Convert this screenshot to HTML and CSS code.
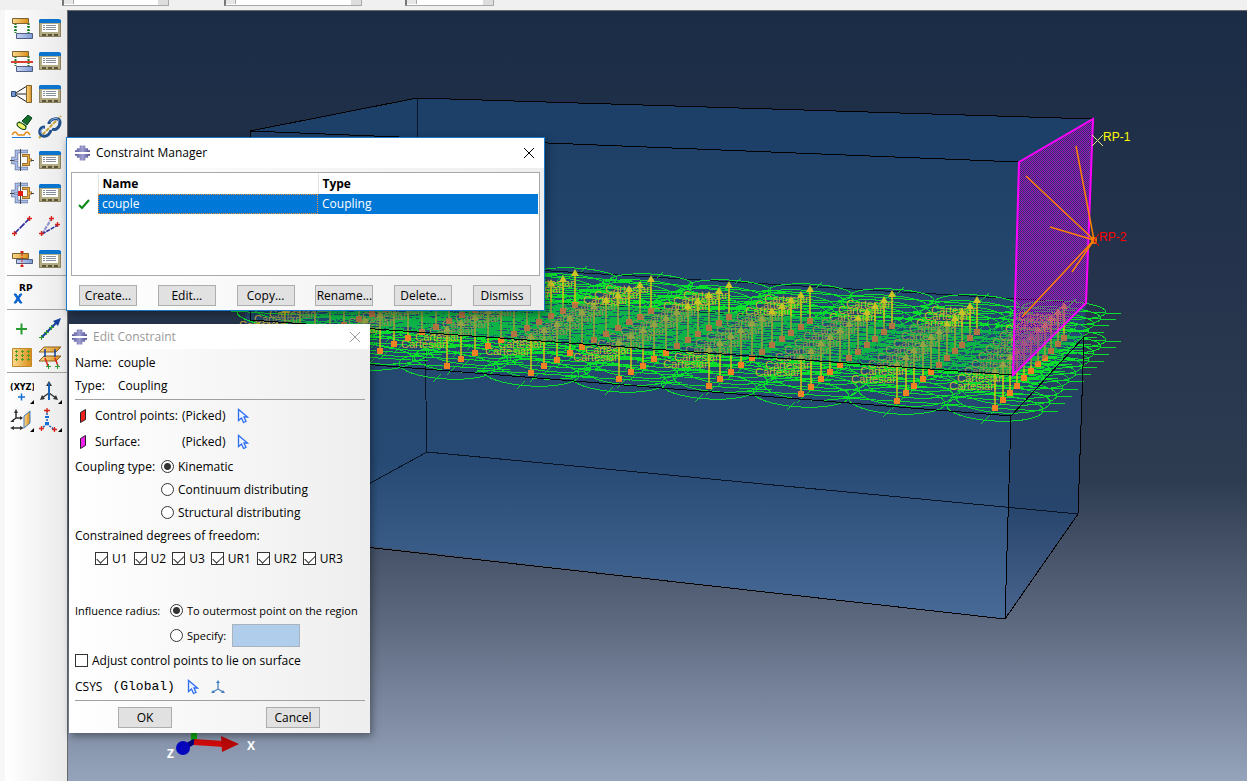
FILE: index.html
```
<!DOCTYPE html>
<html lang="en">
<head>
<meta charset="utf-8">
<title>Constraint Manager</title>
<link rel="stylesheet" href="styles.css">
</head>
<body>
<svg class="defs" aria-hidden="true">
  <defs>
    <linearGradient id="gold" x1="0" x2="1"><stop offset="0" stop-color="#fbd98e"/><stop offset="1" stop-color="#d98d16"/></linearGradient>
    <linearGradient id="steel" x1="0" x2="1"><stop offset="0" stop-color="#c9d6f3"/><stop offset="1" stop-color="#7e9bd6"/></linearGradient>
    <linearGradient id="gem" x1="0" x2="1"><stop offset="0" stop-color="#5a5a9c"/><stop offset=".5" stop-color="#a09fd0"/><stop offset="1" stop-color="#4c4a8c"/></linearGradient>
    <symbol id="manager" viewBox="0 0 24 24">
      <path d="M1 4h22v17H1z" fill="#b3ab84"/><path d="M1.500 6v14.500h21V6" fill="none" stroke="#8a8260"/><path d="M2 3h19l2 1v3H1V4z" fill="#0a74cf"/>
      <path d="M4 8h16v8H4z" fill="#fff"/><path d="M5 9.500h2M8 9.500h10M5 11.500h2M8 11.500h10M5 13.500h2M8 13.500h10" fill="none" stroke="#87909a"/>
      <path d="M4 18h4v2H4zm6 0h4v2h-4zm6 0h4v2h-4z" fill="#5b5638"/>
    </symbol>
    <symbol id="logo" viewBox="0 0 16 16">
      <path d="M5 0h6v3h3v2h2v2H0V5h2V3h3zM0 9h16v2h-2v2h-3v3H5v-3H2v-2H0z" fill="url(#gem)"/>
    </symbol>
    <symbol id="cursor" viewBox="0 0 12 16">
      <path d="M1.500 1.500v11l3-2.500 2 4.500 2.500-1-2-4.500h3.500z" fill="#edf3ff" stroke="#2e6fef" stroke-width="1.300"/>
    </symbol>
    <symbol id="section" viewBox="0 0 24 24">
      <path d="M18 3.500H6.500v7H3v4h3.500v6H18" fill="none" stroke="#68779c" stroke-width="3.500"/><path d="M17.500 3.500H6.500v7H3v4h3.500v6h11" fill="none" stroke="#a9bdea" stroke-width="2"/>
      <path d="M12 7.500h6.500v9H12M18 12h4" fill="none" stroke="#7d6232" stroke-width="3"/><path d="M12.500 7.500h6v9h-6M18 12h3.500" fill="none" stroke="#eaa93c" stroke-width="1.600"/>
      <path d="M10.500 1v22M0 12.500h4m17 0h3" stroke="#444"/>
    </symbol>
  </defs>
</svg>
<div class="app">
  <header class="topbar">
    <select class="combo combo-a" aria-label="Module"></select>
    <select class="combo combo-b" aria-label="Model"></select>
    <select class="combo combo-c" aria-label="Step"></select>
  </header>
  <div class="workspace">
    <nav class="toolbox" aria-label="Toolbox">
      <div class="tools tools-main">
        <button aria-label="Create interaction"><svg viewBox="0 0 24 24"><path d="M5.500 7v10M18.500 7v10" stroke="#148026" stroke-width="2" stroke-dasharray="2 1"/><path d="M2.500 2.500h16v5h-16z" fill="url(#gold)" stroke="#7d6232"/><path d="M6.500 17.500h16v5h-16z" fill="url(#steel)" stroke="#515e80"/><path d="M4 10.500h3M17 10.500h3M4 14.500h3M17 14.500h3" stroke="#148026"/></svg></button>
        <button aria-label="Interaction manager"><svg><use href="#manager"/></svg></button>
        <button aria-label="Create interaction property"><svg viewBox="0 0 24 24"><path d="M5.500 7v10M18.500 7v10" stroke="#148026" stroke-width="2" stroke-dasharray="2 1"/><path d="M2.500 2.500h16v5h-16z" fill="url(#gold)" stroke="#7d6232"/><path d="M6.500 17.500h16v5h-16z" fill="url(#steel)" stroke="#515e80"/><path d="M1 13h22" stroke="#d94032" stroke-width="2"/></svg></button>
        <button aria-label="Interaction property manager"><svg><use href="#manager"/></svg></button>
        <button aria-label="Create constraint"><svg viewBox="0 0 24 24"><path d="M4 12L17 4M4 12h13M4 12l13 8" stroke="#222" fill="none"/><path d="M1.500 9.500h4v5h-4z" fill="#7397cd" stroke="#304d80"/><path d="M16.500 3.500h5v17h-5z" fill="url(#gold)" stroke="#7d6232"/></svg></button>
        <button aria-label="Constraint manager"><svg><use href="#manager"/></svg></button>
        <button aria-label="Find contact pairs"><svg viewBox="0 0 24 24"><path d="M2 22.500h19" stroke="#2178cc"/><path d="M2 20c2-4 4-4 6 0h6c2-4 4-4 6 0" stroke="#e58a16" stroke-width="1.500" fill="none"/><path d="M12 6l6-6 4 3-5 7z" fill="#15702c" stroke="#0b4018"/><path d="M9 6l8 5-2 3-7-5z" fill="#25853a"/><ellipse cx="11.500" cy="11" rx="2.500" ry="5" transform="rotate(-58 11.500 11)" fill="#ebf267" stroke="#0b4018"/></svg></button>
        <button aria-label="Create connector"><svg viewBox="0 0 24 24"><path d="M1 23L23 1" stroke="#c2a237" stroke-width="2" stroke-dasharray="4 1"/><path d="M7 12c-6 0-7 7-2 9 4 1 7-2 8-6M11 9c0-5 11-8 11-2 0 5-4 9-8 7" fill="none" stroke="#214f8b" stroke-width="3"/><path d="M6 13c-4 1-4 5-1 7M12 7c2-4 8-5 9-1" fill="none" stroke="#8fb2de"/></svg></button>
        <button aria-label="Create connector section"><svg><use href="#section"/></svg></button>
        <button aria-label="Connector section manager"><svg><use href="#manager"/></svg></button>
        <button aria-label="Create connector assignment"><svg viewBox="0 0 24 24"><use href="#section"/><path d="M8 10h5v5H8z" fill="#e01d12"/></svg></button>
        <button aria-label="Connector assignment manager"><svg><use href="#manager"/></svg></button>
        <button aria-label="Create wire feature"><svg viewBox="0 0 24 24"><path d="M4 20L20 4" stroke="#2a2a9b" stroke-width="1.600" stroke-dasharray="7 1"/><path d="M2 19.500h5M4.500 17v5M17 4.500h5M19.500 2v5" stroke="#d92118" stroke-width="1.300"/></svg></button>
        <button aria-label="Modify wire feature"><svg viewBox="0 0 24 24"><path d="M4 20L14 4" stroke="#8d8dcb" stroke-width="2" stroke-dasharray="4 1"/><path d="M4 20l16-9" stroke="#2a2a9b" stroke-width="1.600" stroke-dasharray="4 1"/><path d="M1 19.500h5M3.500 17v5M11 4.500h5M13.500 2v5M17 10.500h5M19.500 8v5" stroke="#d92118" stroke-width="1.300"/></svg></button>
        <button aria-label="Create fasteners"><svg viewBox="0 0 24 24"><path d="M2.500 6.500h16v5h-16z" fill="url(#gold)" stroke="#7d6232"/><path d="M6.500 12.500h16v4h-16z" fill="url(#steel)" stroke="#515e80"/><path d="M12 4v16" stroke="#d92118" stroke-dasharray="2 1"/><path d="M10.500 4h3v2h-3zm0 14h3v2h-3z" fill="#d92118"/></svg></button>
        <button aria-label="Fastener manager"><svg><use href="#manager"/></svg></button>
      </div>
      <div class="tools tools-rp">
        <button aria-label="Create reference point"><svg viewBox="0 0 24 24"><text x="9" y="9" class="rp-label">RP</text><path d="M4 12h2l6 9h-2zM10 12h2l-6 9H4z" fill="#0a62ce" stroke="#0a62ce"/></svg></button>
      </div>
      <div class="tools tools-sets">
        <button aria-label="Create point"><svg viewBox="0 0 24 24"><path d="M6 12h11M11.500 6.500v11" stroke="#2a9b32" stroke-width="2"/></svg></button>
        <button aria-label="Create datum line"><svg viewBox="0 0 24 24"><path d="M3 21L20 4" stroke="#123f9c" stroke-width="2"/><path d="M23 1l-3 8-5-5z" fill="#123f9c"/><path d="M1 20.500h5M3.500 18v5M6 15.500h5M8.500 13v5M11 10.500h5M13.500 8v5" stroke="#2a9b32"/></svg></button>
        <button aria-label="Create point pattern"><svg viewBox="0 0 24 24"><path d="M2.500 3.500h19v18h-19z" fill="url(#gold)" stroke="#c08a2a"/><path d="M5 6.500h3M11 6.500h3M17 6.500h3M5 10.500h3M11 10.500h3M17 10.500h3M5 14.500h3M11 14.500h3M17 14.500h3M6.500 5v3M12.500 5v3M18.500 5v3M6.500 9v3M12.500 9v3M18.500 9v3M6.500 13v3M12.500 13v3M18.500 13v3" stroke="#4b9d28"/></svg></button>
        <button aria-label="Create attachment lines"><svg viewBox="0 0 24 24"><path d="M6 2h17l-5 5H1zM6 11h17l-5 5H1z" fill="url(#gold)" stroke="#896323"/><path d="M7 4v8M17 4v8" stroke="#123f9c" stroke-width="1.500"/><path d="M7 13l3 8M17 13l3 8" stroke="#d92118" stroke-width="1.500"/><path d="M8 21.500h5M10.500 19v5M17 21.500h5M19.500 19v5" stroke="#2a9b32"/></svg></button>
      </div>
      <div class="tools tools-datum">
        <button aria-label="Create datum point"><svg viewBox="0 0 24 24"><text x="0" y="10" class="xyz-label">(XYZ)</text><path d="M8 17h7M11.500 13.500v7" stroke="#1470d4" stroke-width="1.500"/><path d="M24 20v4h-4z"/></svg></button>
        <button aria-label="Create datum axis"><svg viewBox="0 0 24 24"><path d="M11 13L4 18M11 13l7 5" stroke="#333" stroke-width="1.500"/><path d="M2 20l2-5 3 4zM20 20l-2-5-3 4zM11 1L8 6h6z" fill="#333"/><path d="M11 3v17" stroke="#1b62b0" stroke-width="2"/><path d="M24 20v4h-4z"/></svg></button>
        <button aria-label="Create datum plane"><svg viewBox="0 0 24 24"><path d="M6 3v7h6M6 10l-4 3M3 20h9" stroke="#333" stroke-width="1.500" fill="none"/><path d="M6 1L4 5h4zM13 10l-3-2v4zM0 20l4-2v4zM14 20l-4-2v4zM0 14l4-3v3z" fill="#333"/><path d="M14 8l6-5v12l-6 5z" fill="url(#gold)" stroke="#3d7ac0"/><path d="M24 20v4h-4z"/></svg></button>
        <button aria-label="Create datum coordinate system"><svg viewBox="0 0 24 24"><path d="M9 2v14M9 16l-5 4M9 16l8 6" stroke="#1b62b0" stroke-width="1.500" stroke-dasharray="2 1"/><path d="M7 8h4v2H7zM7 14h4v3H7z" fill="#1470d4"/><path d="M6 2.500h6M9 0v5M1 20.500h5M3.500 18v5M14 21.500h5M16.500 19v5" stroke="#d92118" stroke-width="1.300"/><path d="M24 20v4h-4z"/></svg></button>
      </div>
    </nav>
    <main class="viewport">
      <svg id="scene" class="scene" viewBox="67 10 1180 771" preserveAspectRatio="xMinYMin slice" role="img" aria-label="Model with coupling constraint">
        <defs>
          <pattern id="mesh" width="2" height="2" patternUnits="userSpaceOnUse"><rect x="1" width="1" height="1" class="dot"/><rect y="1" width="1" height="1" class="dot"/></pattern>
          <linearGradient id="block" gradientUnits="userSpaceOnUse" x1="0" y1="98" x2="0" y2="619"><stop offset="0" stop-color="#1d3d64"/><stop offset=".35" stop-color="#24476e"/><stop offset=".7" stop-color="#274a74"/><stop offset="1" stop-color="#486a97"/></linearGradient>
          <linearGradient id="side" gradientUnits="userSpaceOnUse" x1="0" y1="337" x2="0" y2="619"><stop offset="0" stop-color="#26405f"/><stop offset=".6" stop-color="#27446c"/><stop offset="1" stop-color="#4a658e"/></linearGradient>
        </defs>
        <path d="M250 131L417 98l676 21-7 184-2 34-6 177-73 105-765-88z" fill="url(#block)"/>
        <path d="M250 131L417 98l676 21-74 43z" fill="#1c4068"/>
        <path d="M1011 416l73-79-6 177-73 105z" fill="url(#side)"/>
        <g class="edge edge-far"><path d="M417 98v165l669 40M424 294l660 43M424 294l3 158 651 62M427 452l-177 97"/></g>
        <g id="glyphs"></g>
        <path d="M250 320l763 55 71-38-4-3-660-40z" fill="#1f5688" opacity=".3"/>
        <g class="edge"><path d="M250 131L417 98l676 21M250 131l769 31M250 320l763 55M250 355l761 61-6 203-755-85M1011 416l73-79-6 177-73 105M250 131v189"/></g>
        <path d="M1019 162l74-43-7 184-73 72z" fill="url(#mesh)"/>
        <path d="M1019 162l74-43-7 184-73 72z" class="picked"/>
        <path d="M1094 240l-18-94M1094 240l-68-64M1094 240l-44-13M1094 240l-72 77M1094 240l-22 32" class="link"/>
        <path d="M1092 238h4v5h-4z" class="link"/>
        <path d="M1092 135l11 11M1103 135l-11 11" stroke="#e9e98b"/>
        <path d="M1094 240l5-6M1094 240l5 6" stroke="#f00"/>
        <text x="1103" y="141" class="point-label rp1">RP-1</text>
        <text x="1099" y="241" class="point-label rp2">RP-2</text>
        <path d="M191 730h6v12h-6z" fill="#0ba80b"/><path d="M183 748l12-7" stroke="#00007c" stroke-width="5"/><path d="M194 742l30 2" stroke="#cf0b0b" stroke-width="6"/><path d="M221 736l18 8-17 8z" fill="#b80808"/><circle cx="183" cy="748" r="7" fill="#0606bd"/>
        <text x="247" y="750" class="axis-label">X</text><text x="167" y="758" class="axis-label">Z</text>
      </svg>
    </main>
  </div>

  <section class="window manager" role="dialog" aria-labelledby="manager-title">
    <div class="titlebar"><svg class="logo"><use href="#logo"/></svg><h1 id="manager-title">Constraint Manager</h1><button class="close" aria-label="Close"><svg viewBox="0 0 12 12"><path d="M1 1l10 10M11 1L1 11"/></svg></button></div>
    <div class="manager-body">
      <div class="list">
        <table>
          <colgroup><col class="col-mark"><col><col></colgroup>
          <thead><tr><th></th><th scope="col">Name</th><th scope="col">Type</th></tr></thead>
          <tbody><tr><td><svg class="tick" viewBox="0 0 12 12"><path d="M1 7l3 3 7-8" /></svg></td><td class="selected focused">couple</td><td class="selected">Coupling</td></tr></tbody>
        </table>
      </div>
      <div class="actions"><button class="btn">Create...</button><button class="btn">Edit...</button><button class="btn">Copy...</button><button class="btn">Rename...</button><button class="btn">Delete...</button><button class="btn">Dismiss</button></div>
    </div>
  </section>

  <form class="window editor" role="dialog" aria-labelledby="editor-title">
    <div class="titlebar"><svg class="logo"><use href="#logo"/></svg><h1 id="editor-title">Edit Constraint</h1><button type="button" class="close" aria-label="Close"><svg viewBox="0 0 12 12"><path d="M1 1l10 10M11 1L1 11"/></svg></button></div>
    <div class="editor-body">
      <dl class="facts"><dt>Name:</dt><dd>couple</dd><dt>Type:</dt><dd>Coupling</dd></dl>
      <hr>
      <div class="picks">
        <svg class="region" viewBox="0 0 8 16"><path d="M1.500 4.500l5-3v10l-5 3z" fill="#f02020" stroke="#222"/></svg><span>Control points:</span><span>(Picked)</span><button type="button" class="pick" aria-label="Pick control points"><svg class="cursor"><use href="#cursor"/></svg></button>
        <svg class="region" viewBox="0 0 8 16"><path d="M1.500 4.500l5-3v10l-5 3z" fill="#f020f0" stroke="#222"/></svg><span>Surface:</span><span>(Picked)</span><button type="button" class="pick" aria-label="Pick surface"><svg class="cursor"><use href="#cursor"/></svg></button>
      </div>
      <div class="coupling" role="radiogroup" aria-labelledby="ct"><span id="ct" class="row">Coupling type:</span>
        <div><label class="row"><input type="radio" name="type" checked>Kinematic</label><label class="row"><input type="radio" name="type">Continuum distributing</label><label class="row"><input type="radio" name="type">Structural distributing</label></div>
      </div>
      <div class="row">Constrained degrees of freedom:</div>
      <div class="dof"><label class="row"><input type="checkbox" checked>U1</label><label class="row"><input type="checkbox" checked>U2</label><label class="row"><input type="checkbox" checked>U3</label><label class="row"><input type="checkbox" checked>UR1</label><label class="row"><input type="checkbox" checked>UR2</label><label class="row"><input type="checkbox" checked>UR3</label></div>
      <div class="influence" role="radiogroup" aria-labelledby="ir"><span id="ir" class="row tall">Influence radius:</span>
        <div><label class="row tall"><input type="radio" name="radius" checked>To outermost point on the region</label><div class="specify"><label class="row tall"><input type="radio" name="radius">Specify:</label><input type="text" aria-label="Radius" disabled></div></div>
      </div>
      <label class="row tall"><input type="checkbox">Adjust control points to lie on surface</label>
      <div class="row csys"><span>CSYS</span><span class="mono">(Global)</span><button type="button" class="pick" aria-label="Pick CSYS"><svg class="cursor"><use href="#cursor"/></svg></button><button type="button" class="pick" aria-label="Create CSYS"><svg class="triad" viewBox="0 0 14 14"><path d="M7 2v7l-5 3M7 9l5 3" fill="none" stroke="#4a82bd" stroke-width="1.300"/><path d="M7 0L5 3h4zM0 13l2-3 2 3zM14 13l-2-3-2 3z" fill="#4a82bd"/></svg></button></div>
      <hr>
      <div class="confirm"><button type="button" class="btn">OK</button><button type="button" class="btn">Cancel</button></div>
    </div>
  </form>
</div>
<script src="scene.js"></script>
</body>
</html>
```

FILE: styles.css
```
* { box-sizing: border-box; }
body { margin: 0; font: 12px/16px "Open Sans", "Noto Sans", sans-serif; color: #000; }
.defs { position: absolute; width: 0; height: 0; }
button { font: inherit; color: inherit; padding: 0; margin: 0; border: 0; background: none; }
.app { position: relative; display: flex; flex-direction: column; height: 100vh; overflow: hidden; background: #f0f0f0; }
.topbar { height: 10px; display: flex; align-items: flex-start; padding-left: 62px; overflow: hidden; flex: none; }
.combo { appearance: none; height: 6px; border: 1px solid #a8a8a8; border-top: 0; border-left: 2px solid #777; border-radius: 0; padding: 0;
  background: linear-gradient(#aaa, #aaa) 9px 0 / 1px 4px no-repeat, linear-gradient(#e6e6e6, #e6e6e6) 0 0 / 9px 4px no-repeat, linear-gradient(#ddd, #ddd) right / 10px 100% no-repeat, #fff; }
.combo-a { width: 107px; margin-right: 55px; }
.combo-b { width: 138px; margin-right: 43px; }
.combo-c { width: 89px; }
.workspace { flex: 1; display: flex; min-height: 0; }

.toolbox { width: 67px; flex: none; border-left: 5px solid #f7f7f7; background: linear-gradient(90deg, #fff, #eaeaea); }
.tools { display: grid; grid-template-columns: 28px 28px; margin-left: 2px; border-bottom: 1px solid #a0a0a0; }
.tools button { display: flex; align-items: center; justify-content: center; }
.tools svg { width: 24px; height: 24px; }
.tools-main { grid-auto-rows: 33px; padding: 1px 0 0 1px; }
.tools-rp { grid-auto-rows: 29px; padding: 3px 0 1px 1px; }
.tools-sets, .tools-datum { grid-auto-rows: 28px; padding: 5px 0 1px 1px; }
.tools-datum { border: 0; }
.rp-label { font: bold 9px "DejaVu Sans", sans-serif; }
.xyz-label { font: bold 8px "DejaVu Sans", sans-serif; }

.viewport { flex: 1; min-width: 0; background: linear-gradient(#1b2c46 0, #25344c 35%, #2e3c52 61%, #5c687e 79%, #95a3bb 100%); box-shadow: inset 1px 1px #68686a; }
.scene { display: block; width: 100%; height: 100%; }
.dot { fill: #b400c0; shape-rendering: crispEdges; }
.edge { fill: none; stroke: #000; shape-rendering: crispEdges; }
.edge-far { stroke: #081423; }
.picked { fill: none; stroke: #f0f; stroke-width: 2; }
.link { fill: none; stroke: #ff8000; stroke-width: 1.5; }
.ring { fill: none; stroke: #08dc2c; shape-rendering: crispEdges; }
.stem { stroke: #d6c018; stroke-width: 1.5; }
.base { fill: #ef8024; }
.tip { fill: #c8c426; }
.scene-label { font: 11px "Liberation Sans", sans-serif; fill: #c9ae35; }
.point-label { font: 12px "Liberation Sans", sans-serif; }
.rp1 { fill: #ff0; }
.rp2 { fill: #f00; }
.axis-label { font: bold 12px "Open Sans", sans-serif; fill: #fff; }

.window { position: absolute; box-shadow: 2px 3px 8px rgba(0, 0, 0, .4); background: linear-gradient(90deg, #fff, #eee); }
.titlebar { display: flex; align-items: center; gap: 6px; background: #fff; padding: 0 9px 0 8px; }
.titlebar h1 { flex: 1; margin: 0; font-size: 12px; font-weight: 400; }
.logo { width: 15px; height: 16px; }
.close svg { display: block; width: 12px; height: 12px; fill: none; stroke: currentColor; }
.btn { height: 21px; width: 58px; border: 1px solid #adadad; background: #e1e1e1; text-align: center; white-space: nowrap; }

.manager { left: 66px; top: 137px; width: 479px; border: 1px solid #1979ca; }
.manager .titlebar { height: 30px; }
.manager-body { padding: 4px; }
.list { height: 104px; border: 1px solid #a8a8ac; background: #fff; padding: 1px; }
table { width: 100%; table-layout: fixed; border-collapse: collapse; }
.col-mark { width: 25px; }
th, td { height: 20px; padding: 0 4px; text-align: left; }
th + th { border-left: 1px solid #e3e3e3; }
td:first-child { padding: 0 0 0 5px; }
.tick { display: block; width: 12px; height: 12px; fill: none; stroke: #078a13; stroke-width: 2; }
.selected { background: #0078d7; color: #fff; }
.focused { outline: 1px dotted #ff8728; outline-offset: -1px; }
.actions { display: flex; justify-content: space-between; padding: 9px 9px 0 8px; }

.editor { left: 69px; top: 324px; width: 301px; }
.editor .titlebar { height: 25px; padding-left: 3px; color: #999; }
.editor-body { padding: 2px 5px 5px 6px; }
hr { border: 0; border-top: 1px solid #a0a0a0; margin: 0; }
.facts { display: grid; grid-template-columns: 43px 1fr; grid-auto-rows: 23px; align-items: center; margin: 0; padding-bottom: 2px; }
.facts dd { margin: 0; }
.picks { display: grid; grid-template-columns: 20px 87px 55px 12px; grid-auto-rows: 26px; align-items: center; padding: 3px 0 0; }
.region { width: 8px; height: 16px; margin-left: 4px; }
.cursor { display: block; width: 12px; height: 16px; }
.triad { display: block; width: 14px; height: 14px; }
.row { display: flex; align-items: center; gap: 4px; height: 23px; white-space: nowrap; }
.tall { height: 25px; }
.coupling, .influence { display: flex; gap: 8px; }
.coupling > span { width: 78px; }
.influence { font-size: 11px; }
.influence > span { width: 87px; }
.dof { display: flex; gap: 6px; padding: 0 0 28px 20px; }
input { margin: 0; flex: none; }
input[type="radio"], input[type="checkbox"] { appearance: none; width: 13px; height: 13px; border: 1px solid #333; background: #fff; }
input[type="radio"] { border-radius: 50%; }
input[type="radio"]:checked { background: radial-gradient(circle, #333 0 3px, #fff 4px); }
input[type="checkbox"]:checked::before { content: ""; display: block; width: 9px; height: 5px; margin: 2px 0 0 1px; border: solid #333; border-width: 0 0 1px 1px; transform: rotate(-45deg); }
.specify { display: flex; align-items: center; gap: 6px; }
input[type="text"] { width: 68px; height: 23px; border: 1px solid #a9b3bd; background: #b1cdec; }
.mono { font: 13px "Liberation Mono", monospace; }
.csys { height: 27px; gap: 10px; }
.csys .pick { margin-left: 2px; }
.confirm { display: flex; justify-content: space-between; padding: 6px 45px 0 43px; }
.confirm .btn { width: 54px; }
```

FILE: scene.js
```
const glyphs = document.getElementById('glyphs');

// Bottom anchor of each connector row, front and back ends.
const rows = [
  [285, 347, 425, 294], [365, 357, 500, 299], [447, 366, 575, 305], [531, 373, 651, 311],
  [619, 379, 729, 317], [709, 386, 810, 321], [801, 394, 892, 326], [897, 401, 977, 332], [995, 408, 1064, 338]
];
const rings = [];
const marks = [];
const labels = [];
for (const [x0, y0, x1, y1] of rows) {
  for (let i = 10; i >= 0; i--) {
    const t = i / 10 * (1 + 0.1 * (1 - i / 10));
    const x = Math.round(x0 + (x1 - x0) * t);
    const y = Math.round(y0 + (y1 - y0) * t);
    const top = Math.round(y - 37 + 5 * t);
    const rx = Math.round(48 - 6 * t);
    const ry = Math.round(13 - 4 * t);
    for (const cy of [top + 4, y]) {
      rings.push(`<ellipse cx="${x}" cy="${cy}" rx="${rx}" ry="${ry}" transform="rotate(3 ${x} ${cy})"/>`);
      rings.push(`<path d="M${x - rx - 6} ${cy - 3}L${x + rx + 15} ${cy + 4}M${x - 14} ${cy + ry + 3}l8 -8M${x + 6} ${cy - ry + 4}l6 -6"/>`);
    }
    rings.push(`<path d="M${x - 30} ${y - 16}l60 3"/>`);
    marks.push(`<path class="stem" d="M${x} ${top}V${y}"/><path class="base" d="M${x - 3} ${y - 3}h6v6h-6z"/><path class="tip" d="M${x} ${top - 4}l4 7h-8z"/>`);
    labels.push(`<text class="scene-label" x="${x - 46}" y="${y - 18}">Cartesian</text>`);
  }
}
glyphs.innerHTML = `<g class="ring">${rings.join('')}</g>${labels.join('')}${marks.join('')}`;
```
